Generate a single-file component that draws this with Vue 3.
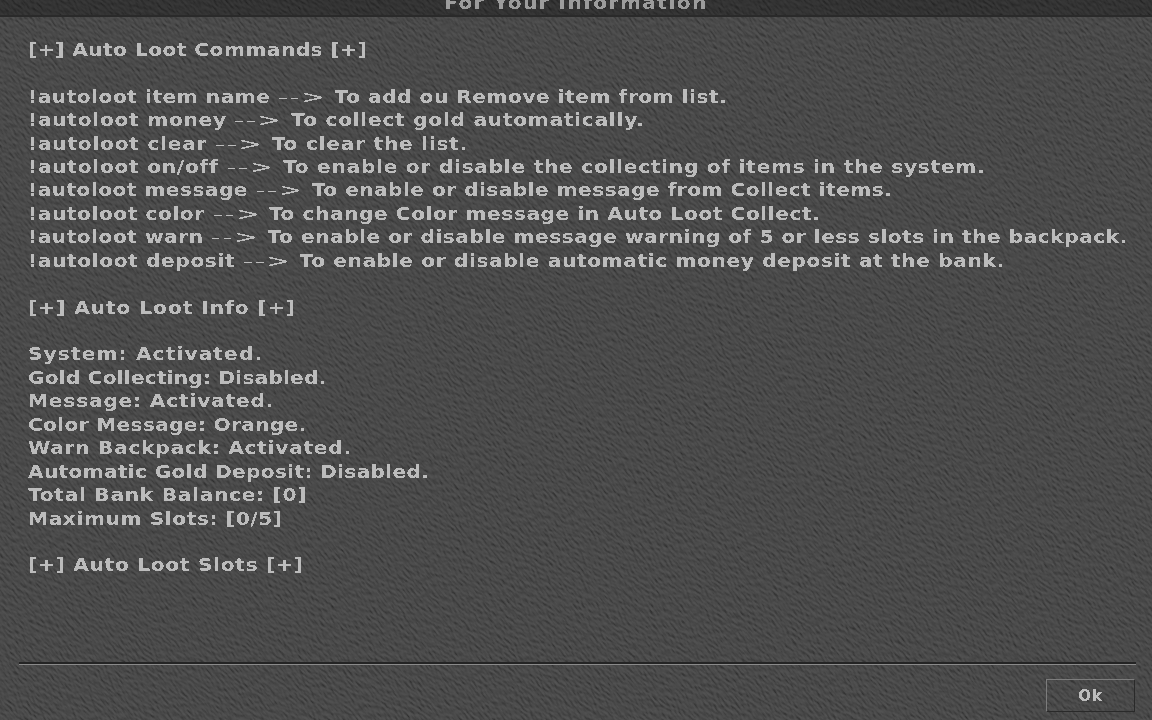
<script setup>
const lines = [
  { text: ['[+] Auto Loot Commands [+]'], nudge: -1 },
  { text: [''] },
  { text: ['!autoloot item name ', ' To add ou Remove item from list.'], nudge: 1 },
  { text: ['!autoloot money ', ' To collect gold automatically.'], nudge: 11 },
  { text: ['!autoloot clear ', ' To clear the list.'], nudge: 9 },
  { text: ['!autoloot on/off ', ' To enable or disable the collecting of items in the system.'], nudge: 18 },
  { text: ['!autoloot message ', ' To enable or disable message from Collect items.'], nudge: -3 },
  { text: ['!autoloot color ', ' To change Color message in Auto Loot Collect.'], nudge: 4 },
  { text: ['!autoloot warn ', ' To enable or disable message warning of 5 or less slots in the backpack.'], nudge: 1 },
  { text: ['!autoloot deposit ', ' To enable or disable automatic money deposit at the bank.'], nudge: 9 },
  { text: [''] },
  { text: ['[+] Auto Loot Info [+]'], nudge: 10 },
  { text: [''] },
  { text: ['System: Activated.'], nudge: 11 },
  { text: ['Gold Collecting: Disabled.'], nudge: -8 },
  { text: ['Message: Activated.'], nudge: 6 },
  { text: ['Color Message: Orange.'], nudge: -4 },
  { text: ['Warn Backpack: Activated.'], nudge: 6 },
  { text: ['Automatic Gold Deposit: Disabled.'], nudge: -6 },
  { text: ['Total Bank Balance: [0]'], nudge: 5 },
  { text: ['Maximum Slots: [0/5]'], nudge: 2 },
  { text: [''] },
  { text: ['[+] Auto Loot Slots [+]'], nudge: 5 }
]

const SCALE = 1.12
const BASE_SPACING = 0.44

function spacing(line) {
  const chars = line.text.join('').length || 1
  return BASE_SPACING + (line.nudge || 0) / (chars * SCALE) + 'px'
}
</script>

<template>
  <div class="window">
    <svg class="texture" width="1152" height="720" aria-hidden="true">
      <defs>
        <filter id="stone" x="-10%" y="-10%" width="120%" height="120%" color-interpolation-filters="sRGB">
          <feTurbulence type="fractalNoise" baseFrequency="0.16 0.48" numOctaves="4" seed="5" result="n" />
          <feDiffuseLighting in="n" surfaceScale="1" diffuseConstant="0.95" lighting-color="#5a5a5a">
            <feDistantLight azimuth="235" elevation="60" />
          </feDiffuseLighting>
        </filter>
        <filter id="crisp" x="-2%" y="-20%" width="104%" height="140%">
          <feComponentTransfer>
            <feFuncA type="discrete" tableValues="0 0 1 1" />
          </feComponentTransfer>
        </filter>
      </defs>
      <g transform="rotate(52 576 360)">
        <rect x="-300" y="-500" width="1752" height="1720" filter="url(#stone)" />
      </g>
    </svg>

    <header class="titlebar"><span class="title">For Your Information</span></header>

    <main class="content">
      <div v-for="(line, i) in lines" :key="i" class="line" :style="{ letterSpacing: spacing(line) }">
        <template v-if="line.text.length === 2">{{ line.text[0] }}<span class="arrow"><span class="arrow-text">--&gt;</span></span>{{ line.text[1] }}</template>
        <template v-else>{{ line.text[0] || '\u00a0' }}</template>
      </div>
    </main>

    <footer class="footer">
      <div class="rule"></div>
      <div class="actions"><button class="ok">Ok</button></div>
    </footer>
  </div>
</template>

<style>
html, body { margin: 0; background: #444; }
</style>

<style scoped>
.window {
  position: relative;
  width: 1152px;
  height: 720px;
  overflow: hidden;
  display: flex;
  flex-direction: column;
  font-family: "DejaVu Sans", sans-serif;
  font-weight: 700;
  background: #464646;
}
.texture { position: absolute; left: 0; top: 0; }
.titlebar {
  position: relative;
  height: 15px;
  flex: none;
  background: rgba(0, 0, 0, 0.3);
  border-bottom: 2px solid #2a2a2a;
  overflow: hidden;
  text-align: center;
}
.title {
  display: block;
  margin-top: -6px;
  font-size: 18px;
  line-height: 18px;
  letter-spacing: 1.25px;
  color: #9c9c9c;
  transform: scaleX(1.12);
  filter: url(#crisp);
}
.content {
  position: relative;
  flex: 1;
  padding: 20.8px 0 0 28px;
  font-size: 18px;
  color: #bcbcbc;
  white-space: pre;
  filter: url(#crisp);
}
.line {
  height: 23.45px;
  line-height: 23.45px;
  transform: scaleX(1.12);
  transform-origin: left center;
}
.arrow {
  display: inline-block;
  width: 43.75px;
  font-weight: 400;
  letter-spacing: 1px;
}
.arrow-text {
  display: inline-block;
  transform: scaleX(1.4);
  transform-origin: left center;
}
.footer { position: relative; flex: none; }
.rule {
  margin: 0 16px 0 19px;
  height: 2px;
  background: #242424;
  border-bottom: 1px solid #8a8a8a;
}
.actions {
  display: flex;
  justify-content: flex-end;
  padding: 14px 17px 8px 0;
}
.ok {
  box-sizing: border-box;
  width: 89px;
  height: 33px;
  padding: 0;
  background: transparent;
  border: 1px solid;
  border-color: #7c7c7c #2c2c2c #2c2c2c #7c7c7c;
  color: #bcbcbc;
  font: 700 15px "DejaVu Sans", sans-serif;
  letter-spacing: 1px;
  filter: url(#crisp);
}
</style>
